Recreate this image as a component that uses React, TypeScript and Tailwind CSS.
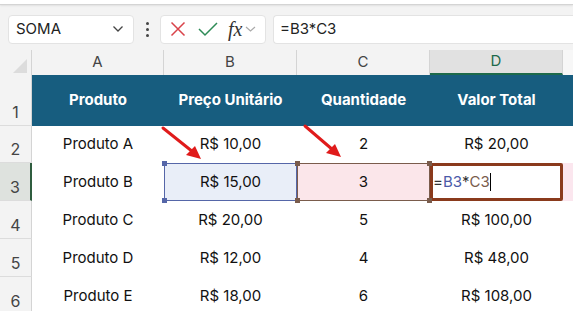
import React from "react";

const rows = [
  ["Produto A", "R$ 10,00", "2", "R$ 20,00"],
  ["Produto B", "R$ 15,00", "3", ""],
  ["Produto C", "R$ 20,00", "5", "R$ 100,00"],
  ["Produto D", "R$ 12,00", "4", "R$ 48,00"],
  ["Produto E", "R$ 18,00", "6", "R$ 108,00"],
];

const cols = "grid-cols-[32px_132px_133px_133px_133px_1fr]";

export default function App() {
  return (
    <div className="relative w-[573px] h-[311px] overflow-hidden bg-[#f3f3f3] font-['Inter',sans-serif] text-[#222]">
      <div className="h-[5px] bg-white border-b border-[#d4d4d4] shadow-[0_1px_2px_rgba(0,0,0,0.08)]" />
      {/* formula bar */}
      <div className="mt-[9px] h-[30px] flex items-center pl-[8px] gap-[0px]">
        <div className="w-[126px] h-[29px] bg-white rounded-[4px] border border-[#e3e3e3] flex items-center justify-between pl-[7px] pr-[9px]">
          <span className="text-[15px] text-[#222]">SOMA</span>
          <svg width="12" height="8" viewBox="0 0 12 8"><path d="M1.5 1.5 L6 6 L10.5 1.5" fill="none" stroke="#444" strokeWidth="1.3" /></svg>
        </div>
        <div className="w-[26px] flex flex-col items-center gap-[3px]">
          <span className="w-[3px] h-[3px] rounded-full bg-[#444]" />
          <span className="w-[3px] h-[3px] rounded-full bg-[#444]" />
          <span className="w-[3px] h-[3px] rounded-full bg-[#444]" />
        </div>
        <div className="w-[106px] h-[29px] bg-white rounded-[4px] border border-[#e3e3e3] flex items-center pl-[9px]">
          <svg width="16" height="16" viewBox="0 0 16 16"><path d="M1.5 1.5 L14.5 14.5 M14.5 1.5 L1.5 14.5" stroke="#d9434a" strokeWidth="1.5" fill="none" /></svg>
          <svg className="ml-[12px]" width="20" height="16" viewBox="0 0 20 16"><path d="M1 8 L7 14 L19 2" stroke="#2e8b57" strokeWidth="1.5" fill="none" /></svg>
          <span className="ml-[10px] font-['Liberation_Serif',serif] italic text-[20px] leading-none text-[#333]">fx</span>
          <svg className="ml-[3px]" width="11" height="8" viewBox="0 0 11 8"><path d="M1 2 L5.5 6 L10 2" fill="none" stroke="#aaa" strokeWidth="1.2" /></svg>
        </div>
        <div className="ml-[7px] flex-1 h-[29px] bg-white rounded-l-[4px] border border-r-0 border-[#e3e3e3] flex items-center pl-[6px]">
          <span className="text-[15px] text-[#222]">=B3*C3</span>
        </div>
      </div>
      {/* column headers */}
      <div className={`mt-[6px] grid ${cols} h-[25px] text-[15px] text-[#444]`}>
        <div className="relative border-r border-[#d4d4d4]">
          <div className="absolute right-[4px] bottom-[2px] w-0 h-0 border-l-[14px] border-l-transparent border-b-[14px] border-b-[#dcdcdc]" />
        </div>
        {["A", "B", "C"].map((c) => (
          <div key={c} className="flex items-center justify-center border-r border-[#d4d4d4]">{c}</div>
        ))}
        <div className="flex items-center justify-center bg-[#e1e1e1] border-r border-[#d4d4d4] border-b-2 border-b-[#1d6a4b] text-[#1d6a4b]">D</div>
        <div className="bg-[#f7f7f7]" />
      </div>
      {/* header row */}
      <div className={`grid ${cols} h-[51px]`}>
        <div className="flex items-end justify-center pb-[1px] text-[16px] text-[#444] border-r border-[#d4d4d4] border-b border-b-[#dcdcdc]">1</div>
        {["Produto", "Preço Unitário", "Quantidade", "Valor Total"].map((h) => (
          <div key={h} className="bg-[#175d7f] flex items-center justify-center text-white font-bold text-[15px]">{h}</div>
        ))}
        <div className="bg-[#175d7f]" />
      </div>
      {rows.map((r, i) => {
        const sel = i === 1;
        const h = i === 0 ? "h-[37px]" : "h-[38px]";
        return (
          <div key={i} className={`grid ${cols} ${h} bg-white`}>
            <div className={`flex items-end justify-center pb-[1px] text-[16px] text-[#444] border-b border-b-[#dcdcdc] ${sel ? "bg-[#dee2de] border-r-2 border-r-[#2f5d3f]" : "bg-[#f3f3f3] border-r border-[#d4d4d4]"}`}>{i + 2}</div>
            <div className="flex items-center justify-center text-[15px] text-[#111]">{r[0]}</div>
            {sel ? (
              <div className="relative flex items-center justify-center text-[15px] text-[#111] bg-[#e9eef8] border-[1.5px] border-[#5566a8]">
                {r[1]}
                <span className="absolute -left-[3px] -top-[3px] w-[5px] h-[5px] bg-[#5566a8]" />
                <span className="absolute -left-[3px] -bottom-[3px] w-[5px] h-[5px] bg-[#5566a8]" />
              </div>
            ) : (
              <div className="flex items-center justify-center text-[15px] text-[#111]">{r[1]}</div>
            )}
            {sel ? (
              <div className="relative flex items-center justify-center text-[15px] text-[#111] bg-[#fbe6ea] border-[1.5px] border-[#7a5c4c]">
                {r[2]}
                <span className="absolute -left-[3px] -top-[3px] w-[5px] h-[5px] bg-[#7a5c4c]" />
                <span className="absolute -right-[3px] -top-[3px] w-[5px] h-[5px] bg-[#7a5c4c]" />
                <span className="absolute -left-[3px] -bottom-[3px] w-[5px] h-[5px] bg-[#7a5c4c]" />
                <span className="absolute -right-[3px] -bottom-[3px] w-[5px] h-[5px] bg-[#7a5c4c]" />
              </div>
            ) : (
              <div className="flex items-center justify-center text-[15px] text-[#111]">{r[2]}</div>
            )}
            {sel ? (
              <div className="bg-[#fbe6ee] p-0">
                <div className="h-full bg-white border-[3px] border-[#8a3a1c] rounded-[2px] flex items-center pl-[0px] text-[15px]">
                  <span className="text-[#333]">=</span>
                  <span className="text-[#4a5aa8]">B3</span>
                  <span className="text-[#333]">*</span>
                  <span className="text-[#7a5c4c]">C3</span>
                  <span className="w-[1px] h-[18px] bg-black" />
                </div>
              </div>
            ) : (
              <div className="flex items-center justify-center text-[15px] text-[#111]">{r[3]}</div>
            )}
            <div className={sel ? "bg-[#fbe6ee]" : ""} />
          </div>
        );
      })}
      {/* arrows */}
      <svg className="absolute left-0 top-0 pointer-events-none" width="573" height="311">
        <line x1="163" y1="128" x2="193" y2="152" stroke="#e01b1b" strokeWidth="3" strokeLinecap="round" />
        <polygon points="201,159 186,155 195,146" fill="#e01b1b" />
        <line x1="305" y1="126" x2="333" y2="150" stroke="#e01b1b" strokeWidth="3" strokeLinecap="round" />
        <polygon points="341,157 326,153 335,144" fill="#e01b1b" />
      </svg>
    </div>
  );
}
